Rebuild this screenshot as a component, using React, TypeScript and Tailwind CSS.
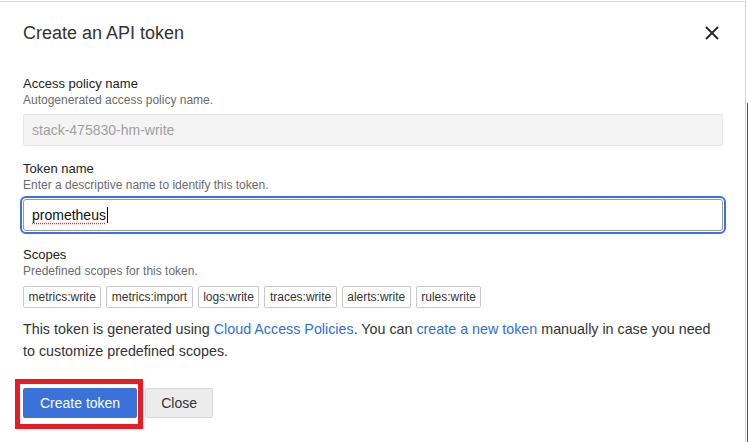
import React from "react";

const SCOPES = [
  "metrics:write",
  "metrics:import",
  "logs:write",
  "traces:write",
  "alerts:write",
  "rules:write",
];

function CloseIcon() {
  return (
    <svg width="14" height="14" viewBox="0 0 14 14" fill="none">
      <path d="M1 1L13 13M13 1L1 13" stroke="#2b2b2b" strokeWidth="2" />
    </svg>
  );
}

export default function App() {
  return (
    <div
      className="flex h-[442px] w-[748px] overflow-hidden bg-white"
      style={{ fontFamily: '"Liberation Sans", Arial, sans-serif' }}
    >
      {/* Dialog */}
      <div className="mt-px h-full w-[746px] border-t border-r border-[#d4d4d4] pl-[23px]">
        {/* Header */}
        <div className="mt-[19px] flex w-[700px] items-center justify-between">
          <h2 className="text-[18px] leading-[24px] text-[#333]">Create an API token</h2>
          <button className="-mr-[1px] flex h-[24px] w-[24px] items-center justify-center">
            <CloseIcon />
          </button>
        </div>

        {/* Access policy name */}
        <div className="mt-[31px] w-[700px]">
          <div className="text-[13px] leading-[16px] text-[#222]">Access policy name</div>
          <div className="text-[12px] leading-[16px] text-[#6b6b6b]">
            Autogenerated access policy name.
          </div>
          <div className="mt-[6px] flex h-[32px] items-center rounded-[2px] border border-[#e6e6e6] bg-[#f4f4f4] pl-[8px] text-[14px] text-[#a0a0a0]">
            stack-475830-hm-write
          </div>
        </div>

        {/* Token name */}
        <div className="mt-[15px] w-[700px]">
          <div className="text-[13px] leading-[16px] text-[#222]">Token name</div>
          <div className="text-[12px] leading-[16px] text-[#6b6b6b]">
            Enter a descriptive name to identify this token.
          </div>
          <div className="mt-[6px] flex h-[32px] items-center rounded-[3px] border border-[#9a9a9a] pl-[8px] text-[14px] text-[#111] outline-2 outline-offset-[1px] outline-[#3b73db] outline-solid">
            <span className="underline decoration-[#e0352b] decoration-dotted underline-offset-[3px]">
              prometheus
            </span>
            <span className="ml-px h-[16px] w-px bg-black" />
          </div>
        </div>

        {/* Scopes */}
        <div className="mt-[16px] w-[700px]">
          <div className="text-[13px] leading-[16px] text-[#222]">Scopes</div>
          <div className="text-[12px] leading-[16px] text-[#6b6b6b]">
            Predefined scopes for this token.
          </div>
          <div className="mt-[7px] flex gap-[5px]">
            {SCOPES.map((s) => (
              <span
                key={s}
                className="rounded-[2px] border border-[#c8c8c8] px-[4.5px] text-[12px] leading-[20px] text-[#333]"
              >
                {s}
              </span>
            ))}
          </div>
        </div>

        {/* Info text */}
        <p className="mt-[10px] w-[700px] text-[14.3px] leading-[22px] text-[#333]">
          This token is generated using{" "}
          <a className="text-[#2f6fd4]">Cloud Access Policies</a>. You can{" "}
          <a className="text-[#2f6fd4]">create a new token</a> manually in case you need
          <br />
          to customize predefined scopes.
        </p>

        {/* Actions */}
        <div className="mt-[26px] flex gap-[8px]">
          <div className="relative">
            <button className="rounded-[2px] border border-[#3a72da] bg-[#3a72da] px-[16px] py-[4px] text-[14px] leading-[20px] text-white">
              Create token
            </button>
            {/* annotation box */}
            <div className="pointer-events-none absolute -top-[9px] -left-[8px] h-[50px] w-[128px] border-[5px] border-[#e81c24]" />
          </div>
          <button className="rounded-[2px] border border-[#d9d9d9] bg-[#ececec] px-[15px] py-[4px] text-[14px] leading-[20px] text-[#333]">
            Close
          </button>
        </div>
      </div>

      {/* Backdrop edge */}
      <div className="flex w-[2px] flex-col">
        <div className="h-[103px] bg-white" />
        <div className="flex-1 border-r border-[#555]" />
      </div>
    </div>
  );
}
